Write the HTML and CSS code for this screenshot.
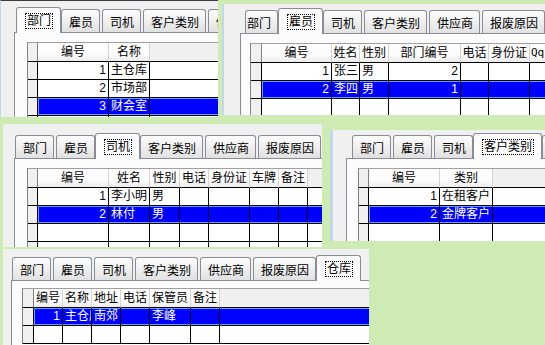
FILE: index.html
```html
<!DOCTYPE html>
<html lang="zh-CN">
<head>
    <meta charset="UTF-8">
    <title>基础资料</title>
    <link rel="stylesheet" href="styles.css">
</head>
<body>
<div class="desk">

    <!-- 部门 -->
    <div class="win win-dept">
        <div class="tabs">
            <span class="tab on"><span class="focus">部门</span></span>
            <span class="tab">雇员</span>
            <span class="tab">司机</span>
            <span class="tab">客户类别</span>
            <span class="tab">供应商</span>
        </div>
        <div class="pane">
            <table class="grid">
                <colgroup><col class="c-ind"><col class="c-id"><col class="c-3"><col></colgroup>
                <tr class="head"><th class="ind"></th><th>编号</th><th>名称</th><th class="fill"></th></tr>
                <tr><td class="ind"></td><td class="num">1</td><td>主仓库</td><td class="fill"></td></tr>
                <tr><td class="ind"></td><td class="num">2</td><td>市场部</td><td class="fill"></td></tr>
                <tr class="sel"><td class="ind"></td><td class="num">3</td><td>财会室</td><td class="fill"></td></tr>
                <tr><td class="ind"></td><td></td><td></td><td class="fill"></td></tr>
            </table>
        </div>
    </div>

    <!-- 雇员 -->
    <div class="win win-emp">
        <div class="tabs">
            <span class="tab cut">部门</span>
            <span class="tab on"><span class="focus">雇员</span></span>
            <span class="tab">司机</span>
            <span class="tab">客户类别</span>
            <span class="tab">供应商</span>
            <span class="tab">报废原因</span>
            <span class="tab">仓库</span>
        </div>
        <div class="pane">
            <table class="grid">
                <colgroup><col class="c-ind2"><col class="c-id2"><col class="c-2n"><col class="c-2"><col class="c-dept"><col class="c-2n"><col class="c-3"><col class="c-2"><col></colgroup>
                <tr class="head"><th class="ind"></th><th>编号</th><th>姓名</th><th>性别</th><th>部门编号</th><th>电话</th><th>身份证</th><th class="latin">Qq</th><th class="fill"></th></tr>
                <tr><td class="ind"></td><td class="num">1</td><td>张三</td><td>男</td><td class="num">2</td><td></td><td></td><td></td><td class="fill"></td></tr>
                <tr class="sel"><td class="ind"></td><td class="num">2</td><td>李四</td><td>男</td><td class="num">1</td><td></td><td></td><td></td><td class="fill"></td></tr>
                <tr><td class="ind"></td><td></td><td></td><td></td><td></td><td></td><td></td><td></td><td class="fill"></td></tr>
            </table>
        </div>
    </div>

    <!-- 司机 -->
    <div class="win win-drv">
        <div class="tabs">
            <span class="tab">部门</span>
            <span class="tab">雇员</span>
            <span class="tab on"><span class="focus">司机</span></span>
            <span class="tab">客户类别</span>
            <span class="tab">供应商</span>
            <span class="tab">报废原因</span>
            <span class="tab">仓库</span>
        </div>
        <div class="pane">
            <table class="grid">
                <colgroup><col class="c-ind"><col class="c-id"><col class="c-3"><col class="c-sex"><col class="c-2"><col class="c-3"><col class="c-2"><col class="c-2"><col></colgroup>
                <tr class="head"><th class="ind"></th><th>编号</th><th>姓名</th><th>性别</th><th>电话</th><th>身份证</th><th>车牌</th><th>备注</th><th class="fill"></th></tr>
                <tr><td class="ind"></td><td class="num">1</td><td>李小明</td><td>男</td><td></td><td></td><td></td><td></td><td class="fill"></td></tr>
                <tr class="sel"><td class="ind"></td><td class="num">2</td><td>林付</td><td>男</td><td></td><td></td><td></td><td></td><td class="fill"></td></tr>
                <tr><td class="ind"></td><td></td><td></td><td></td><td></td><td></td><td></td><td></td><td class="fill"></td></tr>
                <tr><td class="ind"></td><td></td><td></td><td></td><td></td><td></td><td></td><td></td><td class="fill"></td></tr>
            </table>
        </div>
    </div>

    <!-- 客户类别 -->
    <div class="win win-cust">
        <div class="tabs">
            <span class="tab">部门</span>
            <span class="tab">雇员</span>
            <span class="tab">司机</span>
            <span class="tab on"><span class="focus">客户类别</span></span>
            <span class="tab">供应商</span>
        </div>
        <div class="pane">
            <table class="grid">
                <colgroup><col class="c-ind"><col class="c-id"><col class="c-type"><col></colgroup>
                <tr class="head"><th class="ind"></th><th>编号</th><th>类别</th><th class="fill"></th></tr>
                <tr><td class="ind"></td><td class="num">1</td><td>在租客户</td><td class="fill"></td></tr>
                <tr class="sel"><td class="ind"></td><td class="num">2</td><td>金牌客户</td><td class="fill"></td></tr>
                <tr><td class="ind"></td><td></td><td></td><td class="fill"></td></tr>
            </table>
        </div>
    </div>

    <!-- 仓库 -->
    <div class="win win-store">
        <div class="tabs">
            <span class="tab">部门</span>
            <span class="tab">雇员</span>
            <span class="tab">司机</span>
            <span class="tab">客户类别</span>
            <span class="tab">供应商</span>
            <span class="tab">报废原因</span>
            <span class="tab on"><span class="focus">仓库</span></span>
        </div>
        <div class="pane">
            <table class="grid">
                <colgroup><col class="c-ind2"><col class="c-2"><col class="c-2"><col class="c-2"><col class="c-2"><col class="c-3"><col class="c-2"><col></colgroup>
                <tr class="head"><th class="ind"></th><th>编号</th><th>名称</th><th>地址</th><th>电话</th><th>保管员</th><th>备注</th><th class="fill"></th></tr>
                <tr class="sel"><td class="ind"></td><td class="num">1</td><td>主仓库</td><td>南郊</td><td></td><td>李峰</td><td></td><td class="fill"></td></tr>
                <tr><td class="ind"></td><td></td><td></td><td></td><td></td><td></td><td></td><td class="fill"></td></tr>
            </table>
        </div>
    </div>

</div>
</body>
</html>
```

FILE: styles.css
```css
body { margin: 0; background: #cdebb3; font: 12px "Liberation Sans", "Noto Sans CJK SC", sans-serif; color: #000; }
.desk { position: relative; width: 545px; height: 345px; overflow: hidden; }

/* each pasted window */
.win { position: absolute; overflow: hidden; background: #f0f0f0; box-sizing: border-box; }
.win-dept  { left: 0;     top: 0;     width: 218px; height: 117px; border-left: 1px solid #c3d6ee; border-top: 1px solid #3c3c3c; --tx: 17px; --ty: 6px; --px: 13px; --gx: 12px; --gy: 9px; }
.win-emp   { left: 222px; top: 4px;   width: 323px; height: 111px; border-left: 2px solid #c3d6ee; --tx: 21px; --ty: 4px; --px: 16px; --gx: 9px;  --gy: 9px; }
.win-drv   { left: 3px;   top: 124px; width: 319px; height: 123px; --tx: 12px; --ty: 9px; --px: 11px; --gx: 12px; --gy: 9px; }
.win-cust  { left: 330px; top: 130px; width: 215px; height: 111px; border-left: 3px solid #c3d6ee; --tx: 19px; --ty: 3px; --px: 13px; --gx: 11px; --gy: 9px; }
.win-store { left: 3px;   top: 249px; width: 366px; height: 96px;  --tx: 9px;  --ty: 6px; --px: 8px;  --gx: 10px; --gy: 7px; }

/* tab strip */
.tabs { display: flex; align-items: flex-end; gap: 2px; margin: var(--ty) 0 0 var(--tx); position: relative; z-index: 1; }
.tab { display: flex; align-items: center; height: 22px; padding: 0 6px 0 7px; border: 1px solid #898c95; border-bottom: 0; border-radius: 3px 3px 0 0; background: linear-gradient(#fdfdfd, #e1e1e1); white-space: nowrap; flex-shrink: 0; }
.tab.cut { padding-left: 1px; }
.tab.on { height: 25px; margin: 0 -2px -1px; padding: 0 8px 0 9px; background: #fcfcfc; }
.focus { display: inline-block; line-height: 14px; padding: 0 1px; outline: 1px dotted #000; }

.pane { margin-left: var(--px); padding: var(--gy) 0 0 var(--gx); height: 300px; border-top: 1px solid #898c95; border-left: 1px solid #898c95; background: #fcfcfc; }

/* data grid */
.grid { border-collapse: separate; border-spacing: 0; table-layout: fixed; width: 700px; border-top: 1px solid #a0a0a0; border-left: 1px solid #808080; background: #fff; }
.grid th, .grid td { box-sizing: border-box; height: 18px; padding: 0 2px; line-height: 17px; border-right: 1px solid #000; border-bottom: 1px solid #000; overflow: hidden; white-space: nowrap; text-align: left; font-weight: normal; }
.grid th { height: 19px; line-height: 18px; text-align: center; padding: 0; background: linear-gradient(#fdfdfd 60%, #ececec); border-right-color: #d4d4d4; }
.grid .ind { background: #f0f0f0; border-right-color: #000; }
.grid th.ind { border-right-color: #808080; }
.grid th.fill { background: #f0f0f0; border-right: 0; }
.grid td.fill { border-right: 0; }
.grid .num { text-align: right; }
.grid .latin { font-family: "DejaVu Sans Mono", monospace; font-size: 11px; text-align: left; padding-left: 1px; }

.sel td { background: #0000ff; color: #fff; box-shadow: inset 0 1px #5aa6ff, inset 0 -1px #5aa6ff; }
.sel td.ind { background: #f0f0f0; box-shadow: none; }
.sel td.ind + td { box-shadow: inset 1px 0 #5aa6ff, inset 0 1px #5aa6ff, inset 0 -1px #5aa6ff; }

.c-ind { width: 10px; }
.c-ind2 { width: 11px; }
.c-id { width: 71px; }
.c-id2 { width: 70px; }
.c-2 { width: 29px; }
.c-2n { width: 28px; }
.c-sex { width: 30px; }
.c-3 { width: 41px; }
.c-dept { width: 72px; }
.c-type { width: 53px; }
```
